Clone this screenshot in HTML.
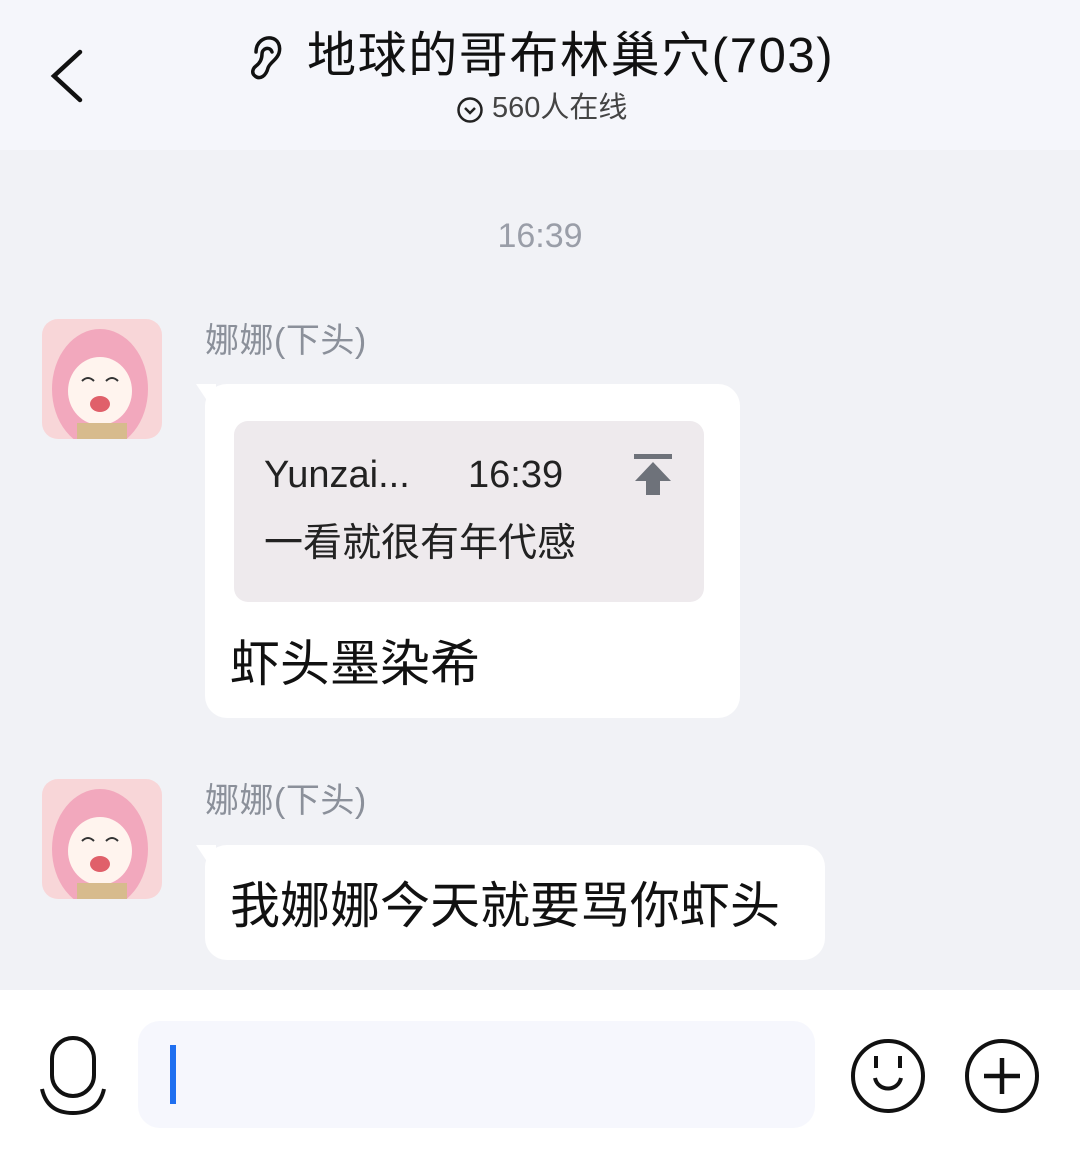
<!DOCTYPE html>
<html><head><meta charset="utf-8"><style>
*{margin:0;padding:0;box-sizing:border-box}
body{width:1080px;height:1159px;background:#f1f2f6;font-family:"Liberation Sans","Noto Sans CJK SC",sans-serif;position:relative;overflow:hidden}
.abs{position:absolute}
.hdr{left:0;top:0;width:1080px;height:150px;background:#f5f6fb}
.title{left:307px;top:25px;font-size:49px;letter-spacing:1.6px;color:#111;white-space:nowrap;line-height:62px}
.sub{left:492px;top:90px;font-size:29px;color:#444;line-height:36px}
.ts{left:0;width:1080px;top:217px;text-align:center;font-size:34px;color:#9a9ea8}
.name{font-size:34px;color:#8b909a;line-height:40px;letter-spacing:0.5px}
.av{width:120px;height:120px;border-radius:16px;background:#f8d6d8;overflow:hidden}
.bub{background:#fff;border-radius:22px}
.msg{font-size:50px;color:#111;white-space:nowrap;line-height:60px}
.bar{left:0;top:990px;width:1080px;height:169px;background:#fff}
</style></head><body>
<div class="abs hdr"></div>
<svg class="abs" style="left:48px;top:48px" width="40" height="56" viewBox="0 0 40 56"><path d="M32 4 L6 28 L32 52" fill="none" stroke="#111" stroke-width="4.5" stroke-linecap="round"/></svg>
<svg class="abs" style="left:246px;top:34px" width="38" height="48" viewBox="0 0 38 48"><path d="M10 18 C10 8 18 3 25 4 C32 5 35 12 33 19 C31 26 24 28 22 34 C20 42 14 46 9 42 C5 39 7 34 10 32 C14 29 16 25 16 20 C16 14 24 12 26 18" fill="none" stroke="#111" stroke-width="3.5" stroke-linecap="round"/></svg>
<div class="abs title">地球的哥布林巢穴(703)</div>
<svg class="abs" style="left:456px;top:96px" width="28" height="28" viewBox="0 0 28 28"><circle cx="14" cy="14" r="11.5" fill="none" stroke="#222" stroke-width="2.5"/><path d="M9 12 L14 17 L19 12" fill="none" stroke="#222" stroke-width="2.5"/></svg>
<div class="abs sub">560人在线</div>
<div class="abs ts">16:39</div>

<div class="abs av" style="left:42px;top:319px"><svg width="120" height="120"><ellipse cx="58" cy="70" rx="48" ry="60" fill="#f2a8bd"/><ellipse cx="58" cy="72" rx="32" ry="34" fill="#fff4ee"/><ellipse cx="58" cy="85" rx="10" ry="8" fill="#e0606a"/><rect x="35" y="104" width="50" height="16" fill="#d7bb8d"/><path d="M40 62 q6-6 12 0 M64 62 q6-6 12 0" stroke="#333" stroke-width="2" fill="none"/></svg></div>
<div class="abs name" style="left:205px;top:321px">娜娜(下头)</div>
<svg class="abs" style="left:196px;top:384px" width="20" height="30"><path d="M0 0 L20 0 L20 30 Z" fill="#fff"/></svg>
<div class="abs bub" style="left:205px;top:384px;width:535px;height:334px"></div>
<div class="abs" style="left:234px;top:421px;width:470px;height:181px;background:#eeeaed;border-radius:14px"></div>
<div class="abs" style="left:264px;top:452px;font-size:38px;color:#222;line-height:46px">Yunzai...</div>
<div class="abs" style="left:468px;top:452px;font-size:38px;color:#222;line-height:46px">16:39</div>
<svg class="abs" style="left:632px;top:454px" width="42" height="42" viewBox="0 0 42 42"><rect x="2" y="0" width="38" height="5" fill="#6e727a"/><path d="M21 8 L39 27 L28 27 L28 41 L14 41 L14 27 L3 27 Z" fill="#6e727a"/></svg>
<div class="abs" style="left:264px;top:520px;font-size:39px;color:#222;line-height:48px">一看就很有年代感</div>
<div class="abs msg" style="left:230px;top:634px">虾头墨染希</div>

<div class="abs av" style="left:42px;top:779px"><svg width="120" height="120"><ellipse cx="58" cy="70" rx="48" ry="60" fill="#f2a8bd"/><ellipse cx="58" cy="72" rx="32" ry="34" fill="#fff4ee"/><ellipse cx="58" cy="85" rx="10" ry="8" fill="#e0606a"/><rect x="35" y="104" width="50" height="16" fill="#d7bb8d"/><path d="M40 62 q6-6 12 0 M64 62 q6-6 12 0" stroke="#333" stroke-width="2" fill="none"/></svg></div>
<div class="abs name" style="left:205px;top:781px">娜娜(下头)</div>
<svg class="abs" style="left:196px;top:845px" width="20" height="30"><path d="M0 0 L20 0 L20 30 Z" fill="#fff"/></svg>
<div class="abs bub" style="left:205px;top:845px;width:620px;height:115px"></div>
<div class="abs msg" style="left:230px;top:876px">我娜娜今天就要骂你虾头</div>

<div class="abs bar"></div>
<svg class="abs" style="left:38px;top:1035px" width="70" height="82" viewBox="0 0 70 82"><rect x="14" y="3" width="42" height="58" rx="21" fill="none" stroke="#111" stroke-width="4"/><path d="M4 54 C8 72 20 78 35 78 C50 78 62 72 66 54" fill="none" stroke="#111" stroke-width="4"/></svg>
<div class="abs" style="left:138px;top:1021px;width:677px;height:107px;background:#f6f7fd;border-radius:22px"></div>
<div class="abs" style="left:170px;top:1045px;width:6px;height:59px;background:#1f6ff0"></div>
<svg class="abs" style="left:848px;top:1036px" width="80" height="80" viewBox="0 0 80 80"><circle cx="40" cy="40" r="35" fill="none" stroke="#111" stroke-width="4"/><path d="M28 20 v12 M52 20 v12" stroke="#111" stroke-width="4"/><path d="M27 42 C30 56 50 56 53 42" fill="none" stroke="#111" stroke-width="4"/></svg>
<svg class="abs" style="left:962px;top:1036px" width="80" height="80" viewBox="0 0 80 80"><circle cx="40" cy="40" r="35" fill="none" stroke="#111" stroke-width="4"/><path d="M40 22 v36 M22 40 h36" stroke="#111" stroke-width="4.5"/></svg>
</body></html>
